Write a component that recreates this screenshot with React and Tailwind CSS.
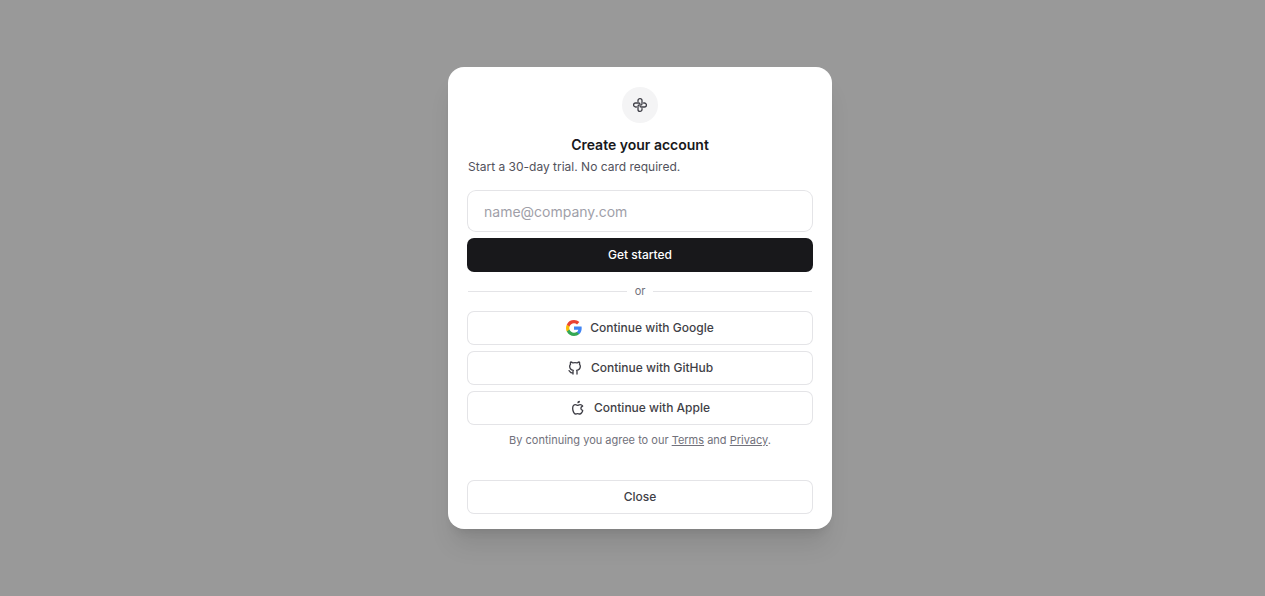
// components/SignupDialog.jsx
import { TbBrandApple, TbBrandGithub } from 'react-icons/tb';

function PinwheelIcon({ className }) {
  return (
    <svg viewBox="0 0 16 16" fill="none" stroke="currentColor" strokeWidth="1.3" strokeLinecap="round" strokeLinejoin="round" className={className} aria-hidden="true">
      {[0, 90, 180, 270].map((deg) => (
        <path key={deg} d="M6 4.4V3.6a2 2 0 0 1 4 0v3.2a1.2 1.2 0 0 1-1.2 1.2" transform={`rotate(${deg} 8 8)`} />
      ))}
    </svg>
  );
}

function GoogleIcon({ className }) {
  return (
    <svg viewBox="0 0 24 24" className={className} aria-hidden="true">
      <path fill="#4285F4" d="M23.52 12.27c0-.85-.08-1.67-.22-2.45H12v4.64h6.46a5.52 5.52 0 0 1-2.4 3.62v3.01h3.88c2.27-2.09 3.58-5.17 3.58-8.82z" />
      <path fill="#34A853" d="M12 24c3.24 0 5.96-1.07 7.94-2.91l-3.88-3.01c-1.07.72-2.45 1.15-4.06 1.15-3.13 0-5.78-2.11-6.72-4.95H1.27v3.11A12 12 0 0 0 12 24z" />
      <path fill="#FBBC05" d="M5.28 14.28A7.2 7.2 0 0 1 4.9 12c0-.79.14-1.56.38-2.28V6.61H1.27A12 12 0 0 0 0 12c0 1.94.46 3.77 1.27 5.39l4.01-3.11z" />
      <path fill="#EA4335" d="M12 4.77c1.76 0 3.35.61 4.59 1.8l3.44-3.44C17.95 1.19 15.24 0 12 0A12 12 0 0 0 1.27 6.61l4.01 3.11C6.22 6.88 8.87 4.77 12 4.77z" />
    </svg>
  );
}

const providers = [
  { name: 'Google', Icon: GoogleIcon },
  { name: 'GitHub', Icon: TbBrandGithub },
  { name: 'Apple', Icon: TbBrandApple },
];

const outlineButton =
  'flex h-8 w-full items-center justify-center gap-2 rounded-md bg-white text-xs font-medium text-zinc-700 ring-1 ring-zinc-200 hover:bg-zinc-50';

export default function App() {
  return (
    <div className="flex min-h-screen items-center justify-center bg-[#999999] pl-[15px] font-['Inter',sans-serif]">
      <div
        role="dialog"
        aria-labelledby="signup-title"
        className="w-full max-w-sm rounded-2xl bg-white px-5 pt-5 pb-4 shadow-xl"
      >
        {/* Header */}
        <div className="mx-auto flex size-9 items-center justify-center rounded-full bg-zinc-100 text-zinc-700">
          <PinwheelIcon className="size-4" />
        </div>
        <h2 id="signup-title" className="mt-3 text-center text-sm leading-5 font-semibold text-zinc-900">
          Create your account
        </h2>
        <p className="mt-1 text-xs leading-4 text-zinc-600">Start a 30-day trial. No card required.</p>

        {/* Email form */}
        <form className="mt-4 space-y-2" onSubmit={(e) => e.preventDefault()}>
          <input
            type="email"
            aria-label="Email"
            placeholder="name@company.com"
            className="block h-10 w-full rounded-lg bg-white px-4 text-sm text-zinc-900 ring-1 ring-zinc-200 outline-none placeholder:text-zinc-400"
          />
          <button
            type="submit"
            className="block h-8 w-full rounded-md bg-zinc-900 text-xs font-medium text-white ring-1 ring-zinc-900 hover:bg-zinc-800"
          >
            Get started
          </button>
        </form>

        <div className="my-3 flex items-center gap-2 text-[11px] leading-[17px] text-zinc-500">
          <span className="h-px flex-1 bg-zinc-200" />
          or
          <span className="h-px flex-1 bg-zinc-200" />
        </div>

        {/* Social sign in */}
        <div className="space-y-2">
          {providers.map(({ name, Icon }) => (
            <button key={name} type="button" className={outlineButton}>
              <Icon className="size-4" />
              Continue with {name}
            </button>
          ))}
        </div>

        <p className="mt-2 text-center text-[11px] leading-[17px] text-zinc-500">
          By continuing you agree to our <a href="#terms" className="underline">Terms</a> and{' '}
          <a href="#privacy" className="underline">Privacy</a>.
        </p>

        <div className="mt-8">
          <button type="button" className={outlineButton}>Close</button>
        </div>
      </div>
    </div>
  );
}
